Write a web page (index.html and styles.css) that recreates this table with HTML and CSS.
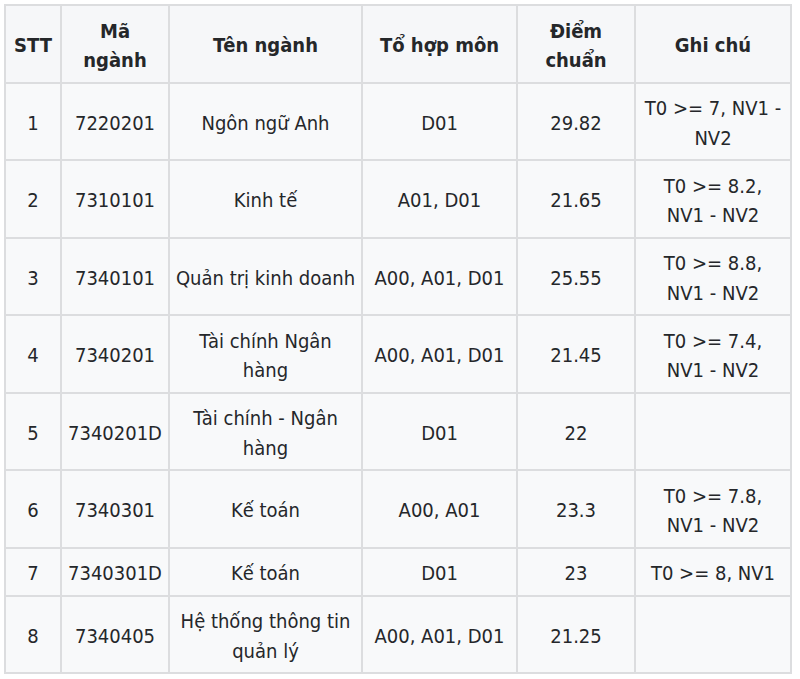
FILE: index.html
```html
<!DOCTYPE html>
<html lang="vi">
<head>
<meta charset="utf-8">
<title>Điểm chuẩn</title>
<link rel="stylesheet" href="styles.css">
</head>
<body>
<table class="score-table">
  <colgroup>
    <col class="c-stt">
    <col class="c-ma">
    <col class="c-ten">
    <col class="c-tohop">
    <col class="c-diem">
    <col class="c-ghichu">
  </colgroup>
  <thead>
    <tr>
      <th>STT</th>
      <th>Mã<br>ngành</th>
      <th>Tên ngành</th>
      <th>Tổ hợp môn</th>
      <th>Điểm<br>chuẩn</th>
      <th>Ghi chú</th>
    </tr>
  </thead>
  <tbody>
    <tr><td>1</td><td>7220201</td><td>Ngôn ngữ Anh</td><td>D01</td><td>29.82</td><td>T0 &gt;= 7, NV1 -<br>NV2</td></tr>
    <tr><td>2</td><td>7310101</td><td>Kinh tế</td><td>A01, D01</td><td>21.65</td><td>T0 &gt;= 8.2,<br>NV1 - NV2</td></tr>
    <tr><td>3</td><td>7340101</td><td>Quản trị kinh doanh</td><td>A00, A01, D01</td><td>25.55</td><td>T0 &gt;= 8.8,<br>NV1 - NV2</td></tr>
    <tr><td>4</td><td>7340201</td><td>Tài chính Ngân<br>hàng</td><td>A00, A01, D01</td><td>21.45</td><td>T0 &gt;= 7.4,<br>NV1 - NV2</td></tr>
    <tr><td>5</td><td>7340201D</td><td>Tài chính - Ngân<br>hàng</td><td>D01</td><td>22</td><td></td></tr>
    <tr><td>6</td><td>7340301</td><td>Kế toán</td><td>A00, A01</td><td>23.3</td><td>T0 &gt;= 7.8,<br>NV1 - NV2</td></tr>
    <tr><td>7</td><td>7340301D</td><td>Kế toán</td><td>D01</td><td>23</td><td>T0 &gt;= 8, NV1</td></tr>
    <tr><td>8</td><td>7340405</td><td>Hệ thống thông tin<br>quản lý</td><td>A00, A01, D01</td><td>21.25</td><td></td></tr>
  </tbody>
</table>
</body>
</html>
```

FILE: styles.css
```css
html, body {
  margin: 0;
  padding: 0;
  background: #ffffff;
}

body {
  padding: 4px 0 0 4px;
  font-family: "DejaVu Sans Condensed", "DejaVu Sans", sans-serif;
  font-size: 20px;
  color: #25272a;
}

.score-table {
  border-collapse: collapse;
  table-layout: fixed;
  width: 787px;
  background: #f8f9fa;
  border: 2px solid #dcdddf;
}

.c-stt { width: 56px; }
.c-ma { width: 108px; }
.c-ten { width: 193px; }
.c-tohop { width: 155px; }
.c-diem { width: 118px; }
.c-ghichu { width: 156px; }

.score-table th,
.score-table td {
  border: 2px solid #dcdddf;
  padding: 10.5px 2px 6px;
  line-height: 29.5px;
  text-align: center;
  vertical-align: middle;
  white-space: nowrap;
}

.score-table th {
  font-weight: bold;
  background: #f6f7f9;
}
```
